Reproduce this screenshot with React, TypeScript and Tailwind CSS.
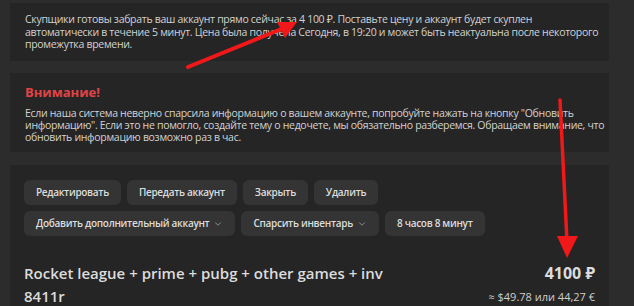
import React from "react";
import { ChevronDown } from "lucide-react";

const Btn = ({ children, caret }: { children: React.ReactNode; caret?: boolean }) => (
  <button className="h-[25px] px-3 rounded-md bg-[#343434] text-[#dcdcdc] text-[10px] tracking-[-0.3px] font-semibold flex items-center gap-1 whitespace-nowrap">
    {children}
    {caret && <ChevronDown size={10} className="text-[#9a9a9a]" />}
  </button>
);

const App = () => {
  return (
    <div
      className="relative w-[634px] h-[306px] overflow-hidden bg-[#2c2c2c] pl-[10px] pt-[3px]"
      style={{ fontFamily: '"Open Sans", "Noto Sans", sans-serif' }}
    >
      <div className="w-[599px] flex flex-col gap-3">
        <div className="h-[58px] bg-[#252525] px-[15px] pt-[10px] text-[10.5px] tracking-[-0.3px] leading-[12.5px] text-[#d2d2d2] whitespace-nowrap">
          Скупщики готовы забрать ваш аккаунт прямо сейчас за 4 100 ₽. Поставьте цену и аккаунт будет скуплен
          <br />
          автоматически в течение 5 минут. Цена была получена Сегодня, в 19:20 и может быть неактуальна после некоторого
          <br />
          промежутка времени.
        </div>

        <div className="h-[79px] bg-[#252525] px-[15px] pt-[11px]">
          <div className="text-[13px] font-bold text-[#e24345] leading-4">Внимание!</div>
          <div className="mt-[7px] text-[10.5px] tracking-[-0.3px] leading-[12px] text-[#d2d2d2] whitespace-nowrap">
            Если наша система неверно спарсила информацию о вашем аккаунте, попробуйте нажать на кнопку "Обновить
            <br />
            информацию". Если это не помогло, создайте тему о недочете, мы обязательно разберемся. Обращаем внимание, что
            <br />
            обновить информацию возможно раз в час.
          </div>
        </div>

        <div className="mt-px h-[160px] bg-[#252525] px-[14px] pt-[15px]">
          <div className="flex flex-col gap-[6px]">
            <div className="flex gap-[6px]">
              <Btn>Редактировать</Btn>
              <Btn>Передать аккаунт</Btn>
              <Btn>Закрыть</Btn>
              <Btn>Удалить</Btn>
            </div>
            <div className="flex gap-[6px]">
              <Btn caret>Добавить дополнительный аккаунт</Btn>
              <Btn caret>Спарсить инвентарь</Btn>
              <Btn>8 часов 8 минут</Btn>
            </div>
          </div>
          <div className="mt-[26px] flex justify-between">
            <div className="max-w-[400px] text-[15px] leading-[23px] font-semibold text-[#dcdcdc]">
              Rocket league + prime + pubg + other games + inv 8411r
            </div>
            <div className="flex flex-col items-end">
              <div className="text-[16px] leading-[23px] font-bold text-[#dcdcdc]">4100 ₽</div>
              <div className="text-[11px] leading-[23px] text-[#cfcfcf]">≈ $49.78 или 44,27 €</div>
            </div>
          </div>
        </div>
      </div>

      <svg className="absolute inset-0 pointer-events-none" width="634" height="306">
        <line x1="188" y1="67" x2="284" y2="28" stroke="#f01818" strokeWidth="4" strokeLinecap="round" />
        <polygon points="297,22 277,22 285,38" fill="#f01818" />
        <line x1="560" y1="100" x2="567" y2="242" stroke="#f01818" strokeWidth="3.5" strokeLinecap="round" />
        <polygon points="557,236 578,236 567,258" fill="#f01818" />
      </svg>
    </div>
  );
};

export default App;
